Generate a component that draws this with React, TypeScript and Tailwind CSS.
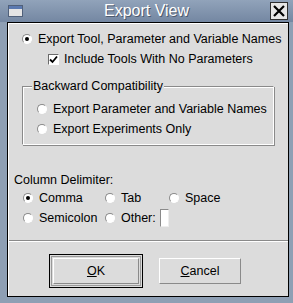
import React from "react";

function Radio({ checked }: { checked?: boolean }) {
  return (
    <span className="relative flex h-[10px] w-[10px] shrink-0 items-center justify-center rounded-full border border-b-white border-l-[#8a8a8a] border-r-white border-t-[#8a8a8a] bg-white">
      {checked && <span className="h-[4px] w-[4px] rounded-full bg-black" />}
    </span>
  );
}

function Check() {
  return (
    <span className="flex h-[11px] w-[11px] shrink-0 items-center justify-center border border-b-white border-l-[#6a6a6a] border-r-white border-t-[#6a6a6a] bg-white">
      <svg width="9" height="9" viewBox="0 0 9 9">
        <path d="M1 4.5 L3.5 7 L8 1.5" stroke="#000" strokeWidth="1.8" fill="none" />
      </svg>
    </span>
  );
}

function Opt({ label, checked, className = "" }: { label: string; checked?: boolean; className?: string }) {
  return (
    <div className={`flex h-[16px] items-center gap-[6px] ${className}`}>
      <Radio checked={checked} />
      <span>{label}</span>
    </div>
  );
}

export default function App() {
  return (
    <div
      className="flex h-[303px] w-[293px] flex-col bg-[#8e9fb4] text-[12.5px] text-black"
      style={{ fontFamily: '"Liberation Sans", Arial, sans-serif' }}
    >
      <div className="flex h-[22px] shrink-0 items-center bg-gradient-to-b from-[#91a3ba] to-[#7487a2] pl-[8px] pr-[5px]">
        <span className="flex h-[12px] w-[15px] flex-col border border-[#50607a] bg-[#e4e4e4]">
          <span className="h-[3px] bg-[#5b79b0]" />
        </span>
        <span className="flex-1 text-center text-[16px] leading-none text-white [text-shadow:1px_1px_0_#4d5a6e]">
          Export View
        </span>
        <span className="flex h-[18px] w-[18px] items-center justify-center border border-[#2e2e2e] bg-[#e6e6e6]">
          <svg width="14" height="14" viewBox="0 0 14 14">
            <path d="M2 2 L12 12 M12 2 L2 12" stroke="#000" strokeWidth="2.2" />
          </svg>
        </span>
      </div>

      <div className="ml-[7px] mr-[4px] mb-[6px] flex flex-1 flex-col border border-black bg-[#dcdcdc]">
        <div className="border-l border-t border-white flex-1 flex flex-col">
          <Opt label="Export Tool, Parameter and Variable Names" checked className="ml-[13px] mt-[7px]" />
          <div className="ml-[39px] mt-[4px] flex h-[16px] items-center gap-[5px]">
            <Check />
            <span>Include Tools With No Parameters</span>
          </div>

          <div className="relative ml-[13px] mt-[19px] h-[59px] w-[252px] border border-b-white border-l-[#8a8a8a] border-r-white border-t-[#8a8a8a] shadow-[inset_1px_1px_0_#fff,1px_1px_0_#8a8a8a]">
            <span className="absolute left-[9px] top-[-9px] bg-[#dcdcdc] px-[1px] leading-[16px]">
              Backward Compatibility
            </span>
            <Opt label="Export Parameter and Variable Names" className="ml-[14px] mt-[14px]" />
            <Opt label="Export Experiments Only" className="ml-[14px] mt-[4px]" />
          </div>

          <div className="ml-[5px] mt-[27px] h-[16px] leading-[16px]">Column Delimiter:</div>
          <div className="ml-[14px] mt-[2px] grid grid-cols-[82px_64px_auto] gap-y-[4px]">
            <Opt label="Comma" checked />
            <Opt label="Tab" />
            <Opt label="Space" />
            <Opt label="Semicolon" />
            <div className="flex h-[16px] items-center gap-[6px]">
              <Radio />
              <span>Other:</span>
              <span className="-ml-[2px] h-[18px] w-[11px] border border-b-[#eee] border-l-[#8a8a8a] border-r-[#eee] border-t-[#8a8a8a] bg-white" />
            </div>
          </div>

          <div className="mt-[14px] h-[2px] border-b border-t border-b-white border-t-[#8a8a8a]" />

          <div className="ml-[40px] mt-[12px] flex items-center gap-[16px]">
            <div className="border border-black p-[1px]">
              <div className="border border-[#9a9a9a] p-[1px]">
                <button className="flex h-[26px] w-[86px] items-center justify-center border border-b-[#8a8a8a] border-l-white border-r-[#8a8a8a] border-t-white bg-[#dcdcdc]">
                  <span><u>O</u>K</span>
                </button>
              </div>
            </div>
            <button className="flex h-[26px] w-[82px] items-center justify-center border border-b-[#8a8a8a] border-l-white border-r-[#8a8a8a] border-t-white bg-[#dcdcdc]">
              <span><u>C</u>ancel</span>
            </button>
          </div>
        </div>
      </div>
    </div>
  );
}
